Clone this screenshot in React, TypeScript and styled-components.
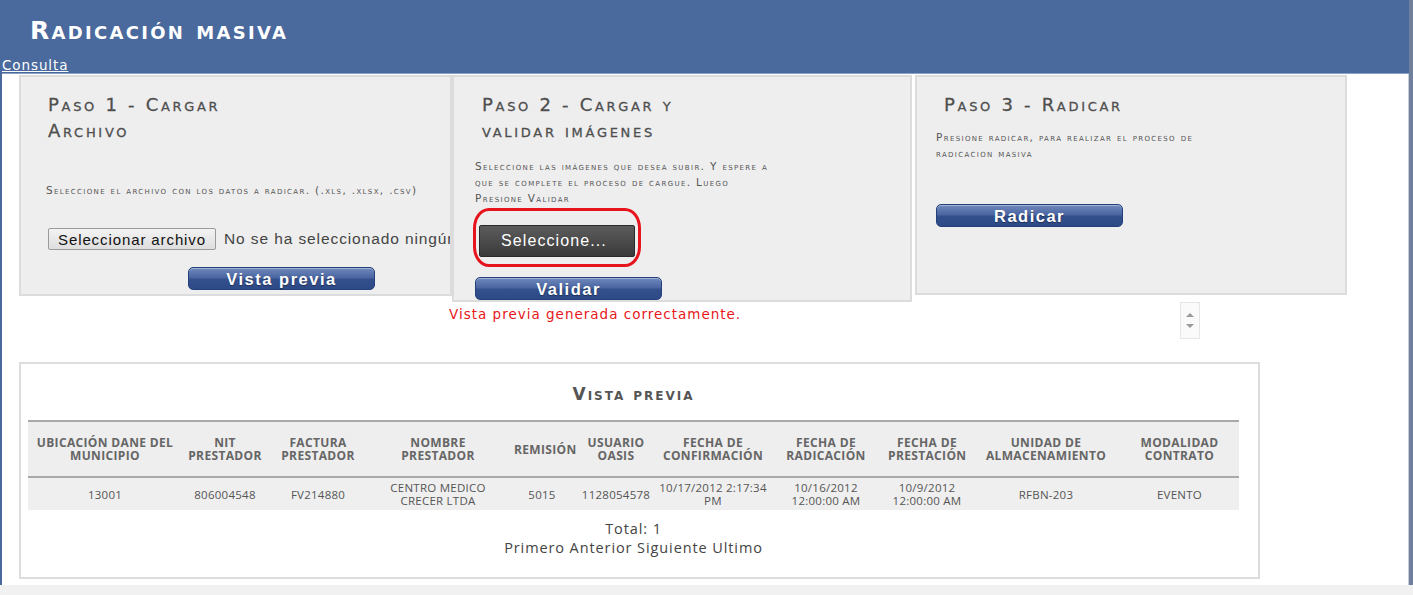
import React from "react";
import styled, { createGlobalStyle } from "styled-components";

const Global = createGlobalStyle`
  html, body { margin: 0; padding: 0; background: #f0f0f0; }
  body { font-family: "Open Sans", "DejaVu Sans", sans-serif; }
  * { box-sizing: border-box; }
`;

const Screen = styled.div`
  width: 1413px;
  height: 595px;
  display: flex;
  flex-direction: column;
  background: #f1f1f1;
  overflow: hidden;
`;

const Window = styled.div`
  width: 1413px;
  height: 585px;
  background: #ffffff;
  border-left: 2px solid #4a699c;
  border-right: 4px solid #6f7f9c;
  box-shadow: inset -1px 0 0 #c8cfdb;
  display: flex;
  flex-direction: column;
`;

const Header = styled.header`
  height: 74px;
  background: #4a699d;
  display: flex;
  flex-direction: column;
  justify-content: space-between;
  border-bottom: 1px solid #8aa0c4;
`;

const Title = styled.h1`
  margin: 15px 0 0 28px;
  font-family: "DejaVu Sans", Verdana, sans-serif;
  font-variant: small-caps;
  font-weight: 700;
  font-size: 25px;
  line-height: 32px;
  color: #ffffff;
  letter-spacing: 2.3px;
`;

const NavLink = styled.a`
  font-family: "DejaVu Sans", Verdana, sans-serif;
  font-size: 13.5px;
  line-height: 17px;
  letter-spacing: 0.9px;
  color: #ffffff;
  text-decoration: underline;
  margin-bottom: -1px;
  width: max-content;
  cursor: pointer;
`;

const Steps = styled.div`
  display: flex;
  align-items: flex-start;
  padding-left: 17px;
  margin-top: 1px;
`;

const Panel = styled.section<{ $w: number; $h: number; $pl: number; $ml?: number }>`
  width: ${(p) => p.$w}px;
  height: ${(p) => p.$h}px;
  margin-left: ${(p) => p.$ml ?? 0}px;
  flex: none;
  background: #eeeeee;
  border: 2px solid #dcdcdc;
  padding-left: ${(p) => p.$pl}px;
  display: flex;
  flex-direction: column;
  align-items: flex-start;
  overflow: hidden;
`;

const StepTitle = styled.h2<{ $mt: number; $ml: number }>`
  margin: ${(p) => p.$mt}px 0 0 ${(p) => p.$ml}px;
  font-family: "DejaVu Sans", Verdana, sans-serif;
  font-variant: small-caps;
  font-weight: 400;
  font-size: 18px;
  line-height: 26px;
  color: #4f4f4f;
  letter-spacing: 2.7px;
  -webkit-text-stroke: 0.3px #4f4f4f;
`;

const StepText = styled.p<{ $mt: number; $w: number }>`
  margin: ${(p) => p.$mt}px 0 0 0;
  width: ${(p) => p.$w}px;
  font-family: "DejaVu Sans", Verdana, sans-serif;
  font-variant: small-caps;
  font-size: 10.5px;
  line-height: 16px;
  color: #555555;
  letter-spacing: 1.35px;
`;

const FileRow = styled.div`
  margin: 30px 0 0 2px;
  display: flex;
  align-items: center;
  white-space: nowrap;
`;

const FileButton = styled.button`
  height: 22px;
  width: 168px;
  padding: 0;
  font-family: "Liberation Sans", Arial, sans-serif;
  font-size: 15px;
  letter-spacing: 0.9px;
  color: #111;
  background: linear-gradient(#f3f3f3, #dedede);
  border: 1px solid #9a9a9a;
  border-radius: 2px;
`;

const FileStatus = styled.span`
  margin-left: 8px;
  font-family: "Liberation Sans", Arial, sans-serif;
  font-size: 15.5px;
  letter-spacing: 0.9px;
  color: #444;
`;

const BlueButton = styled.button<{ $mt: number; $ml: number }>`
  margin: ${(p) => p.$mt}px 0 0 ${(p) => p.$ml}px;
  width: 187px;
  height: 23px;
  padding: 0;
  border: 1px solid #24407a;
  border-radius: 5px;
  background: linear-gradient(#7089bd 0%, #4b66a2 45%, #334f8c 55%, #2e4a86 100%);
  box-shadow: inset 0 1px 0 rgba(255, 255, 255, 0.35);
  color: #ffffff;
  font-family: "Liberation Sans", Arial, sans-serif;
  font-weight: 700;
  font-size: 16.5px;
  letter-spacing: 1.5px;
  line-height: 20px;
  text-shadow: 0 1px 1px rgba(0, 0, 0, 0.4);
  cursor: pointer;
`;

const Highlight = styled.div`
  margin: 2px 0 0 -2px;
  width: 168px;
  height: 60px;
  border: 3px solid #e8141d;
  border-radius: 16px / 20px;
  padding: 14px 0 0 3px;
`;

const DarkButton = styled.button`
  width: 156px;
  height: 32px;
  border: 1px solid #2a2a2a;
  border-radius: 2px;
  background: linear-gradient(#5c5c5c, #3a3a3a);
  color: #ffffff;
  font-family: "Liberation Sans", Arial, sans-serif;
  font-size: 16px;
  letter-spacing: 1.1px;
  text-align: left;
  padding: 0 0 0 21px;
`;

const StatusRow = styled.div`
  display: flex;
  align-items: flex-start;
  height: 60px;
`;

const StatusMessage = styled.div`
  margin: 3px 0 0 447px;
  width: 731px;
  font-family: "DejaVu Sans", Verdana, sans-serif;
  font-size: 13.5px;
  letter-spacing: 1px;
  line-height: 18px;
  color: #e8171b;
`;

const Spinner = styled.div`
  width: 20px;
  height: 37px;
  border: 1px solid #e6e6e6;
  background: #fafafa;
  display: flex;
  flex-direction: column;
  justify-content: space-around;
  align-items: center;
  padding: 6px 0;
`;

const PreviewBox = styled.section`
  margin-left: 17px;
  width: 1241px;
  height: 217px;
  border: 2px solid #dddddd;
  padding: 0 19px 0 7px;
  display: flex;
  flex-direction: column;
  align-items: stretch;
`;

const PreviewTitle = styled.h3`
  margin: 18px 0 0 0;
  text-align: center;
  font-family: "DejaVu Sans", Verdana, sans-serif;
  font-variant: small-caps;
  font-weight: 700;
  font-size: 17px;
  line-height: 24px;
  color: #555555;
  letter-spacing: 2px;
`;

const Table = styled.table`
  margin-top: 14px;
  width: 1211px;
  table-layout: fixed;
  border-collapse: collapse;
  font-family: "Open Sans", "DejaVu Sans", sans-serif;
`;

const HeadCell = styled.th`
  background: #eeeeee;
  border-top: 2px solid #a9a9a9;
  border-bottom: 2px solid #a9a9a9;
  height: 56px;
  padding: 0 6px;
  font-size: 12px;
  font-weight: 700;
  letter-spacing: 0.35px;
  line-height: 13px;
  color: #666666;
  text-align: center;
  text-transform: uppercase;
`;

const Cell = styled.td`
  background: #efefef;
  height: 33px;
  padding: 0 1px;
  font-size: 11.5px;
  letter-spacing: 0.25px;
  line-height: 13px;
  color: #555555;
  text-align: center;
`;

const Pager = styled.div`
  margin-top: 9px;
  text-align: center;
  font-family: "Open Sans", "DejaVu Sans", sans-serif;
  font-size: 14.5px;
  letter-spacing: 0.9px;
  line-height: 19px;
  color: #444444;
`;

const cols = [154, 86, 100, 140, 68, 80, 114, 112, 90, 148, 119];
const heads = [
  "Ubicación DANE del municipio",
  "NIT prestador",
  "Factura prestador",
  "Nombre prestador",
  "Remisión",
  "Usuario OASIS",
  "Fecha de confirmación",
  "Fecha de radicación",
  "Fecha de prestación",
  "Unidad de almacenamiento",
  "Modalidad contrato",
];
const row = [
  "13001",
  "806004548",
  "FV214880",
  "CENTRO MEDICO CRECER LTDA",
  "5015",
  "1128054578",
  "10/17/2012 2:17:34 PM",
  "10/16/2012 12:00:00 AM",
  "10/9/2012 12:00:00 AM",
  "RFBN-203",
  "EVENTO",
];

const Arrow = ({ up }: { up?: boolean }) => (
  <svg width="8" height="5" viewBox="0 0 8 5">
    <path d={up ? "M0 5 L4 1 L8 5 Z" : "M0 0 L4 4 L8 0 Z"} fill="#9a9a9a" />
  </svg>
);

export default function App() {
  return (
    <>
      <Global />
      <Screen>
        <Window>
          <Header>
            <Title>Radicación masiva</Title>
            <NavLink>Consulta</NavLink>
          </Header>
          <Steps>
            <Panel $w={433} $h={221} $pl={25}>
              <StepTitle $mt={15} $ml={2}>
                Paso 1 - Cargar
                <br />
                Archivo
              </StepTitle>
              <StepText $mt={38} $w={400}>
                Seleccione el archivo con los datos a radicar. (.xls, .xlsx, .csv)
              </StepText>
              <FileRow>
                <FileButton>Seleccionar archivo</FileButton>
                <FileStatus>No se ha seleccionado ningún archivo</FileStatus>
              </FileRow>
              <BlueButton $mt={17} $ml={142}>Vista previa</BlueButton>
            </Panel>
            <Panel $w={460} $h={227} $pl={21}>
              <StepTitle $mt={15} $ml={7}>
                Paso 2 - Cargar y
                <br />
                validar imágenes
              </StepTitle>
              <StepText $mt={14} $w={306}>
                Seleccione las imágenes que desea subir. Y espere a que se complete el proceso de
                cargue. Luego Presione Validar
              </StepText>
              <Highlight>
                <DarkButton>Seleccione...</DarkButton>
              </Highlight>
              <BlueButton $mt={10} $ml={0}>Validar</BlueButton>
            </Panel>
            <Panel $w={432} $h={220} $pl={19} $ml={3}>
              <StepTitle $mt={15} $ml={8}>
                Paso 3 - Radicar
              </StepTitle>
              <StepText $mt={11} $w={285}>
                Presione radicar, para realizar el proceso de radicacion masiva
              </StepText>
              <BlueButton $mt={43} $ml={0}>Radicar</BlueButton>
            </Panel>
          </Steps>
          <StatusRow>
            <StatusMessage>Vista previa generada correctamente.</StatusMessage>
            <Spinner>
              <Arrow up />
              <Arrow />
            </Spinner>
          </StatusRow>
          <PreviewBox>
            <PreviewTitle>Vista previa</PreviewTitle>
            <Table>
              <colgroup>
                {cols.map((w, i) => (
                  <col key={i} style={{ width: w }} />
                ))}
              </colgroup>
              <thead>
                <tr>
                  {heads.map((h) => (
                    <HeadCell key={h}>{h}</HeadCell>
                  ))}
                </tr>
              </thead>
              <tbody>
                <tr>
                  {row.map((c, i) => (
                    <Cell key={i}>{c}</Cell>
                  ))}
                </tr>
              </tbody>
            </Table>
            <Pager>
              Total: 1
              <br />
              Primero Anterior Siguiente Ultimo
            </Pager>
          </PreviewBox>
        </Window>
      </Screen>
    </>
  );
}
